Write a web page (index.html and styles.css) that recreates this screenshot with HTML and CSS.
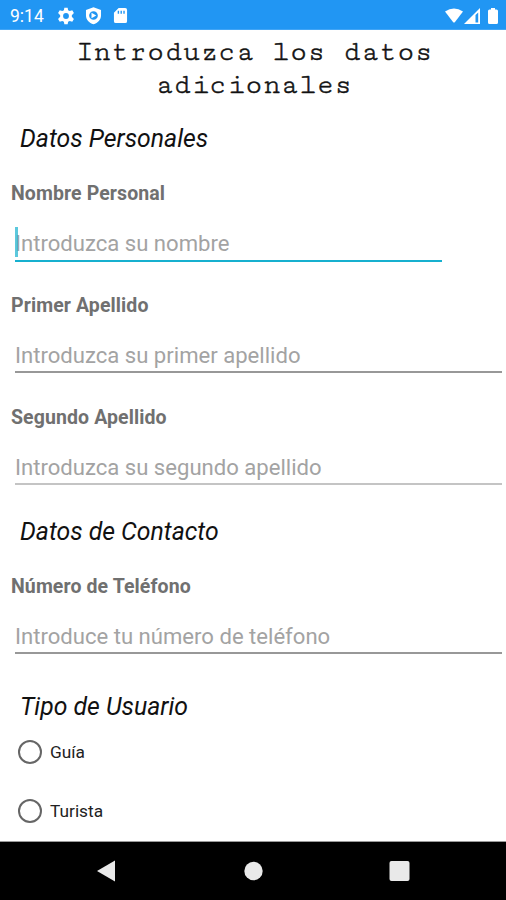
FILE: index.html
```html
<!DOCTYPE html>
<html lang="es">
<head>
<meta charset="utf-8">
<title>Datos adicionales</title>
<link rel="stylesheet" href="styles.css">
</head>
<body>
<header class="status">
  <span class="clock">9:14</span>
  <svg class="gear" viewBox="0 0 24 24"><path fill-rule="evenodd" d="M10 2h4l.5 3 2 1 3-1 2 3.500L19 11v2l2.500 2.500-2 3.500-3-1-2 1-.5 3h-4l-.5-3-2-1-3 1-2-3.500L5 13v-2L2.500 8.500l2-3.500 3 1 2-1zM12 8.500a3.500 3.500 0 1 0 0 7 3.500 3.500 0 0 0 0-7z"/></svg>
  <svg class="shield" viewBox="0 0 24 24"><path fill-rule="evenodd" d="M12 1.500 2.500 5v7c0 5.500 4 9.500 9.500 11 5.500-1.500 9.500-5.500 9.500-11V5zM12 6.500a5.500 5.500 0 1 0 0 11 5.500 5.500 0 0 0 0-11z"/><path d="m9.500 8.500 6 3.500-6 3.500z"/></svg>
  <svg class="card" viewBox="0 0 16 18"><path fill-rule="evenodd" d="M6 1h7q2 0 2 2v12q0 2-2 2H3q-2 0-2-2V6zM5 4h1.500v3H5zm3 0h1.500v3H8zm3 0h1.500v3H11z"/></svg>
  <span class="spacer"></span>
  <svg class="wifi" viewBox="0 0 20 16"><path d="M1 4q9-6 18 0l-8 10.500q-1 1-2 0z"/></svg>
  <svg class="signal" viewBox="0 0 16 16"><path fill-rule="evenodd" d="M16 0v16H0zM11.500 7v7.500h2.700V4.500z"/></svg>
  <svg class="battery" viewBox="0 0 10 16"><path d="M3 0h4v1.500h1.500Q10 1.500 10 3v11.500Q10 16 8.500 16h-7Q0 16 0 14.500V3Q0 1.500 1.500 1.500H3z"/></svg>
</header>
<main class="form">
  <h1 class="title">Introduzca los datos<br>adicionales</h1>
  <h2 class="section">Datos Personales</h2>
  <label class="label">Nombre Personal</label>
  <div class="field active"><i class="caret"></i>Introduzca su nombre</div>
  <label class="label low">Primer Apellido</label>
  <div class="field name">Introduzca su primer apellido</div>
  <label class="label low">Segundo Apellido</label>
  <div class="field surname">Introduzca su segundo apellido</div>
  <h2 class="section">Datos de Contacto</h2>
  <label class="label">Número de Teléfono</label>
  <div class="field phone">Introduce tu número de teléfono</div>
  <h2 class="section type">Tipo de Usuario</h2>
  <div class="option"><i class="radio"></i><span>Guía</span></div>
  <div class="option"><i class="radio"></i><span>Turista</span></div>
</main>
<nav class="nav">
  <svg viewBox="0 0 24 24"><path d="M20 1.500v21L2 12z"/></svg>
  <svg viewBox="0 0 24 24"><circle cx="12.500" cy="12" r="9.200"/></svg>
  <svg viewBox="0 0 24 24"><rect x="2.500" y="2" width="20" height="20" rx="2"/></svg>
</nav>
</body>
</html>
```
FILE: styles.css
```css
* { box-sizing: border-box; }
body { margin: 0; width: 506px; height: 900px; display: flex; flex-direction: column; overflow: hidden; background: #fff; font-family: Roboto, sans-serif; }
.status { height: 30px; flex: none; background: #2196f3; border-bottom: 1px solid #42a5f5; color: #fff; display: flex; align-items: center; padding: 2px 8px 0 10px; }
.status svg { fill: #fff; flex: none; }
.clock { width: 46px; font-size: 17.500px; font-weight: 400; }
.gear { width: 20px; height: 20px; margin-right: 8px; }
.shield { width: 19px; height: 19px; margin-right: 10px; }
.card { width: 15px; height: 17px; }
.spacer { flex: 1; }
.wifi { width: 20px; height: 17px; }
.signal { width: 16px; height: 16px; }
.battery { width: 10px; height: 16px; margin-left: 8px; }
.form { height: 811px; flex: none; }
.title { margin: 0; padding: 6px 0 0 2px; height: 72px; font: 400 29.500px/33px "Cutive Mono", "Liberation Mono", monospace; text-align: center; color: #111; -webkit-text-stroke: .5px #111; }
.section { margin: 0; padding-left: 20px; height: 74px; line-height: 74px; font-size: 24.800px; font-weight: 400; font-style: italic; color: #111; }
.label { display: block; height: 35px; line-height: 35px; padding-left: 11px; font-size: 19.500px; letter-spacing: .1px; font-weight: 700; color: #707070; }
.label.low { line-height: 37px; }
.field { position: relative; height: 51px; margin: 0 4px 25px 15px; padding-top: 13px; line-height: 38px; border-bottom: 2px solid #989898; font-size: 22.100px; color: #a3a3a3; }
.field.active { width: 427px; border-color: #16b0cf; }
.field.name { margin-bottom: 26px; padding-top: 14px; }
.field.surname { margin-bottom: 10px; padding-top: 14px; border-color: #c4c4c4; }
.field.phone { height: 50px; margin-bottom: 37px; }
.caret { position: absolute; left: 0; top: 16px; width: 3px; height: 30px; background: #26b5d2; opacity: .75; }
.section.type { height: 31px; line-height: 31px; }
.option { display: flex; align-items: center; height: 59px; padding-left: 18px; gap: 8px; font-size: 17.300px; color: #222; }
.radio { width: 24px; height: 24px; border: 2px solid #666; border-radius: 50%; }
.nav { height: 59px; flex: none; background: #000; border-top: 1px solid #9a9a9a; display: flex; align-items: center; justify-content: space-between; padding: 0 95px; }
.nav svg { width: 24px; height: 24px; fill: #e9e9e9; }
```
